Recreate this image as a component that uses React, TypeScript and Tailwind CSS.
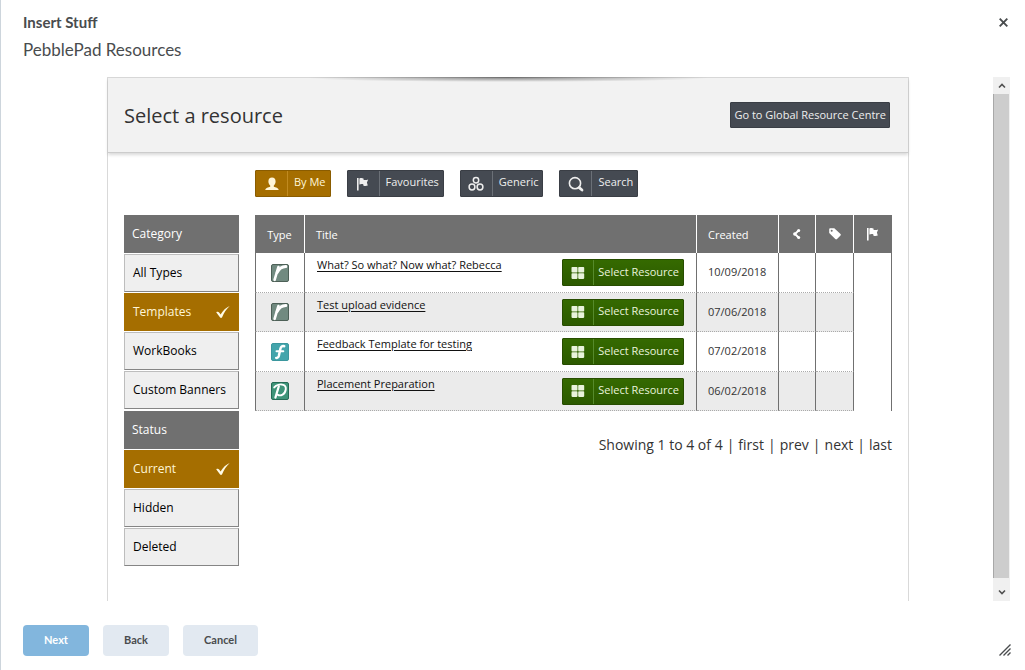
import { ReactNode } from "react";

function FlagIcon() {
  return (
    <svg width="16" height="16" viewBox="0 0 16 16" fill="currentColor" aria-hidden="true">
      <path d="M2 2h1.6v12.5H2z" />
      <path d="M4.4 2.6c1.6-.8 2.9-.6 4.1 0v1.2c1.3.5 2.9.4 4.7-.3l-1.3 3 .9 3c-1.600.6-3.200.6-4.500-.1V8.200c-1.300-.5-2.600-.4-3.900.2z" />
    </svg>
  );
}

function PersonIcon() {
  return (
    <svg width="16" height="16" viewBox="0 0 16 16" fill="currentColor" aria-hidden="true">
      <path d="M8 1.500c2.300 0 3.600 1.600 3.600 3.900 0 1.700-.7 3.200-1.800 4v1.300c1.900.5 4.700 1.200 4.900 3.300H1.300c.2-2.100 3-2.800 4.900-3.300V9.400c-1.100-.8-1.800-2.300-1.800-4C4.400 3.100 5.700 1.500 8 1.500z" />
    </svg>
  );
}

function CirclesIcon() {
  return (
    <svg width="16" height="16" viewBox="0 0 16 16" fill="none" stroke="currentColor" strokeWidth="1.500" aria-hidden="true">
      <circle cx="8" cy="4.200" r="2.700" />
      <circle cx="4" cy="11" r="2.900" />
      <circle cx="12" cy="11" r="2.900" />
    </svg>
  );
}

function SearchIcon() {
  return (
    <svg width="16" height="16" viewBox="0 0 16 16" fill="none" stroke="currentColor" aria-hidden="true">
      <circle cx="7" cy="7.200" r="5.600" strokeWidth="1.600" />
      <path d="M11.200 11.700l2.800 2.300" strokeWidth="2.800" strokeLinecap="round" />
    </svg>
  );
}

function GridIcon() {
  return (
    <svg width="14" height="14" viewBox="0 0 14 14" fill="currentColor" aria-hidden="true">
      <rect x="0.500" y="1" width="6" height="5.600" rx="0.800" />
      <rect x="7.200" y="1" width="6" height="5.600" rx="0.800" />
      <rect x="0.500" y="7.300" width="6" height="5.600" rx="0.800" />
      <rect x="7.200" y="7.300" width="6" height="5.600" rx="0.800" />
    </svg>
  );
}

function ShareIcon() {
  return (
    <svg width="12" height="12" viewBox="0 0 12 12" fill="currentColor" aria-hidden="true">
      <path d="M7.500 2.500L4 6l3.500 3.500" fill="none" stroke="currentColor" strokeWidth="1.900" />
      <circle cx="7.700" cy="2.500" r="1.500" />
      <circle cx="3.800" cy="6" r="1.700" />
      <circle cx="7.700" cy="9.500" r="1.500" />
    </svg>
  );
}

function TagIcon() {
  return (
    <svg width="14" height="14" viewBox="0 0 14 14" aria-hidden="true">
      <path d="M1.200 2.300c0-.6.5-1.100 1.100-1.100h4l6.200 5.700c.5.500.5 1.100 0 1.600L9 12.100c-.5.500-1.200.5-1.700 0L1.200 6z" fill="currentColor" />
      <circle cx="3.700" cy="3.700" r="1" fill="#707070" />
    </svg>
  );
}

function TickIcon() {
  return (
    <svg width="16" height="14" viewBox="0 0 16 14" fill="#fffbe6" aria-hidden="true">
      <path d="M1.200 7.200c1.100-.7 2.200-.6 2.900.3l1.500 1.900C8 5.500 11 2.700 14.700 1c-3.300 3-5.700 6.700-7.600 11.300-.6.700-1.400.8-2 .1z" />
    </svg>
  );
}

type Kind = "r" | "f" | "p";

const badge: Record<Kind, { name: string; fill: string; edge: string; strokes: ReactNode }> = {
  r: {
    name: "Reflection",
    fill: "#718a80",
    edge: "#4d6057",
    strokes: (
      <>
        <path d="M7.400 3L3.600 15.800" strokeWidth="2.600" />
        <path d="M6.200 8.400C7.800 5.200 10.400 2.800 14.800 2.600" strokeWidth="3" />
      </>
    ),
  },
  f: {
    name: "Feedback",
    fill: "#43a5ac",
    edge: "#3b979e",
    strokes: (
      <>
        <path d="M13.200 3.200c-2-.6-3.300.4-3.800 2.600L7.800 13c-.4 1.600-1.300 2.200-2.600 1.900" strokeWidth="2.500" />
        <path d="M5.500 8.200h6.800" strokeWidth="2" />
      </>
    ),
  },
  p: {
    name: "Plan",
    fill: "#3f9479",
    edge: "#256b55",
    strokes: (
      <>
        <path d="M7.800 4.400L4.400 15.600" strokeWidth="2.200" />
        <path d="M3.200 5.400C5.200 3 9.200 2 12.200 2.800c4.400 1.400 2.700 8.400-1.200 10.200-1.700.7-3.400.4-4.700-.6" strokeWidth="1.900" />
      </>
    ),
  },
};

function TypeIcon({ kind }: { kind: Kind }) {
  const b = badge[kind];
  return (
    <svg className="mx-auto block" width="18" height="18" viewBox="0 0 18 18" role="img" aria-label={b.name}>
      <rect x="0.500" y="0.500" width="17" height="17" rx="1.500" fill={b.fill} stroke={b.edge} />
      <g fill="none" stroke="#fff" strokeLinecap="round" strokeLinejoin="round">
        {b.strokes}
      </g>
    </svg>
  );
}

const filters = [
  { label: "By Me", icon: <PersonIcon />, active: true },
  { label: "Favourites", icon: <FlagIcon />, active: false },
  { label: "Generic", icon: <CirclesIcon />, active: false },
  { label: "Search", icon: <SearchIcon />, active: false },
];

const groups = [
  { heading: "Category", items: ["All Types", "Templates", "WorkBooks", "Custom Banners"], selected: "Templates" },
  { heading: "Status", items: ["Current", "Hidden", "Deleted"], selected: "Current" },
];

const rows: { kind: Kind; title: string; created: string }[] = [
  { kind: "r", title: "What? So what? Now what? Rebecca", created: "10/09/2018" },
  { kind: "r", title: "Test upload evidence", created: "07/06/2018" },
  { kind: "f", title: "Feedback Template for testing", created: "07/02/2018" },
  { kind: "p", title: "Placement Preparation", created: "06/02/2018" },
];

function Sidebar() {
  return (
    <nav className="flex w-[115px] shrink-0 flex-col gap-[2px] text-xs">
      {groups.map((g) => (
        <div key={g.heading} className="flex flex-col gap-px">
          <h2 className="flex h-[38px] items-center bg-[#707070] px-2 text-white">{g.heading}</h2>
          {g.items.map((item) =>
            item === g.selected ? (
              <button
                key={item}
                type="button"
                aria-pressed="true"
                className="flex h-[38px] items-center justify-between bg-[#a56e00] pr-2 pl-[9px] text-left text-[#fff6d8]"
              >
                {item}
                <TickIcon />
              </button>
            ) : (
              <button
                key={item}
                type="button"
                aria-pressed="false"
                className="flex h-[38px] items-center border border-[#bdbdbd] border-r-[#858585] border-b-[#858585] bg-[#efefef] pl-2 text-left whitespace-nowrap text-black"
              >
                {item}
              </button>
            ),
          )}
        </div>
      ))}
    </nav>
  );
}

function ResourceTable() {
  const th = "border-r border-white px-[11px] pt-[2px] text-left font-normal";
  const td = "border-r border-r-[#707070] border-b border-b-[#aaaaaa] [border-bottom-style:dotted]";
  return (
    <table className="w-full table-fixed border-separate border-spacing-0 text-[11px] text-[#333333]">
      <colgroup>
        <col className="w-[50px]" />
        <col />
        <col className="w-[82px]" />
        <col className="w-[37px]" />
        <col className="w-[38px]" />
        <col className="w-[38px]" />
      </colgroup>
      <thead>
        <tr className="h-[38px] bg-[#707070] text-white">
          <th scope="col" className="border-r border-white pt-[2px] text-center font-normal">Type</th>
          <th scope="col" className={th}>Title</th>
          <th scope="col" className={th}>Created</th>
          <th scope="col" aria-label="Shared" className="border-r border-white">
            <span className="flex justify-center"><ShareIcon /></span>
          </th>
          <th scope="col" aria-label="Tags" className="border-r border-white">
            <span className="flex justify-center"><TagIcon /></span>
          </th>
          <th scope="col" aria-label="Favourite">
            <span className="flex justify-center"><FlagIcon /></span>
          </th>
        </tr>
      </thead>
      <tbody>
        {rows.map((r, i) => (
          <tr key={r.title} className="h-10 even:h-[39px]">
            <td className={i % 2 ? `${td} border-l border-l-[#707070] bg-[#ebebeb]` : `${td} border-l border-l-[#707070]`}>
              <TypeIcon kind={r.kind} />
            </td>
            <td className={i % 2 ? `${td} bg-[#ebebeb] px-3` : `${td} px-3`}>
              <div className="flex items-start justify-between">
                <a href="#" className="leading-3 text-[#111111] underline underline-offset-2">
                  {r.title}
                </a>
                <button
                  type="button"
                  className="flex h-[27px] shrink-0 items-center rounded-[1px] border border-[#274d00] bg-linear-to-b from-[#356a00] to-[#2c5a00] text-[#e9f3dc]"
                >
                  <span className="flex h-full w-[31px] items-center justify-center border-r border-[#568a2c]">
                    <GridIcon />
                  </span>
                  <span className="px-1 pb-px">Select Resource</span>
                </button>
              </div>
            </td>
            <td className={i % 2 ? `${td} bg-[#ebebeb] px-[11px]` : `${td} px-[11px]`}>{r.created}</td>
            <td className={i % 2 ? `${td} bg-[#ebebeb]` : td} />
            <td className={i % 2 ? `${td} bg-[#ebebeb]` : td} />
            {i === 0 && <td rowSpan={rows.length} className="border-r border-[#707070] bg-white" />}
          </tr>
        ))}
      </tbody>
    </table>
  );
}

export default function App() {
  return (
    <div className="flex h-screen flex-col border-l border-[#cdd5dc] bg-white font-['Lato',sans-serif] text-[#494c4e]">
      <header className="flex items-start justify-between pt-3 pr-[11px] pl-[22px]">
        <div>
          <h1 className="text-[15px] leading-5 font-bold">Insert Stuff</h1>
          <h2 className="mt-2 mb-[17px] text-[17px] leading-5">PebblePad Resources</h2>
        </div>
        <button type="button" aria-label="Close" className="p-[6px]">
          <svg width="9" height="9" viewBox="0 0 9 9" fill="none" stroke="currentColor" strokeWidth="1.900" aria-hidden="true">
            <path d="M.7.7l7.600 7.600M8.300.7L.7 8.300" />
          </svg>
        </button>
      </header>

      <div className="flex min-h-0 flex-1 pr-[15px] pl-[22px]">
        <main className="min-w-0 flex-1 overflow-hidden font-['Open_Sans',sans-serif]">
          <div className="mx-auto flex h-full w-full max-w-[802px] flex-col border border-b-0 border-[#d9d9d9] bg-white">
            <div className="relative flex h-[75px] shrink-0 items-center justify-between border-b border-[#cccccc] bg-[#f2f2f2] pr-[18px] pl-4 shadow-[0_2px_3px_rgba(0,0,0,0.15)]">
              <div className="absolute inset-x-0 -top-px h-px bg-linear-to-r from-transparent from-25% via-[#707070] to-transparent to-75%" />
              <div className="absolute inset-x-0 top-0 h-1 bg-[radial-gradient(ellipse_25%_100%_at_50%_0%,rgba(0,0,0,0.4),transparent)]" />
              <h3 className="pt-[2px] text-xl text-[#333333]">Select a resource</h3>
              <button
                type="button"
                className="h-[26px] rounded-[1px] border border-[#3a3e45] bg-[#454a52] px-[3px] text-[11px] text-[#eeeeee]"
              >
                Go to Global Resource Centre
              </button>
            </div>

            <div className="flex flex-col pt-[17px] pr-4 pl-4">
              <div className="ml-[131px] flex gap-4">
                {filters.map((f) => (
                  <button
                    key={f.label}
                    type="button"
                    aria-pressed={f.active}
                    className={
                      f.active
                        ? "flex h-[27px] items-center rounded-[1px] border border-[#8a5c00] bg-[#a56e00] text-[11px] text-[#fff6d8]"
                        : "flex h-[27px] items-center rounded-[1px] border border-[#3a3e45] bg-[#454a52] text-[11px] text-[#eeeeee]"
                    }
                  >
                    <span
                      className={
                        f.active
                          ? "flex h-full w-8 items-center justify-center border-r border-[#c08a20]"
                          : "flex h-full w-8 items-center justify-center border-r border-[#6b7077]"
                      }
                    >
                      {f.icon}
                    </span>
                    <span className="pr-1 pb-[2px] pl-[6px]">{f.label}</span>
                  </button>
                ))}
              </div>

              <div className="mt-[18px] flex gap-4">
                <Sidebar />
                <section className="min-w-0 flex-1">
                  <ResourceTable />
                  <p className="mt-6 flex justify-end gap-1 text-sm leading-5 text-[#333333]">
                    <span>Showing 1 to 4 of 4</span>|
                    <a href="#">first</a>|
                    <a href="#">prev</a>|
                    <a href="#">next</a>|
                    <a href="#">last</a>
                  </p>
                </section>
              </div>
            </div>
          </div>
        </main>

        <div className="flex w-[17px] shrink-0 flex-col bg-[#f0f0f0] text-[#505050]">
          <button type="button" aria-label="Scroll up" className="flex h-[17px] items-center justify-center">
            <svg width="8" height="6" viewBox="0 0 8 6" fill="none" stroke="currentColor" strokeWidth="1.600" aria-hidden="true">
              <path d="M1 4.500l3-3 3 3" />
            </svg>
          </button>
          <div className="mr-px flex-1 border-l border-[#a8a8a8] bg-[#cdcdcd]" />
          <button type="button" aria-label="Scroll down" className="flex h-[23px] items-center justify-center pt-1">
            <svg width="8" height="6" viewBox="0 0 8 6" fill="none" stroke="currentColor" strokeWidth="1.600" aria-hidden="true">
              <path d="M1 1.500l3 3 3-3" />
            </svg>
          </button>
        </div>
      </div>

      <footer className="flex items-end justify-between pt-6 pr-[14px] pb-[14px] pl-[22px]">
        <div className="flex gap-[14px] text-[11px] font-bold">
          <button type="button" className="h-[31px] min-w-[66px] rounded bg-[#82b6dd] px-[21px] text-white">Next</button>
          <button type="button" className="h-[31px] min-w-[66px] rounded bg-[#e2e9f1] px-[21px]">Back</button>
          <button type="button" className="h-[31px] min-w-[75px] rounded bg-[#e2e9f1] px-[21px]">Cancel</button>
        </div>
        <svg width="12" height="12" viewBox="0 0 12 12" fill="none" stroke="currentColor" strokeWidth="1.400" aria-hidden="true">
          <path d="M0.500 11.500l11-11M4.500 11.500l7-7M8.500 11.500l3-3" />
        </svg>
      </footer>
    </div>
  );
}
